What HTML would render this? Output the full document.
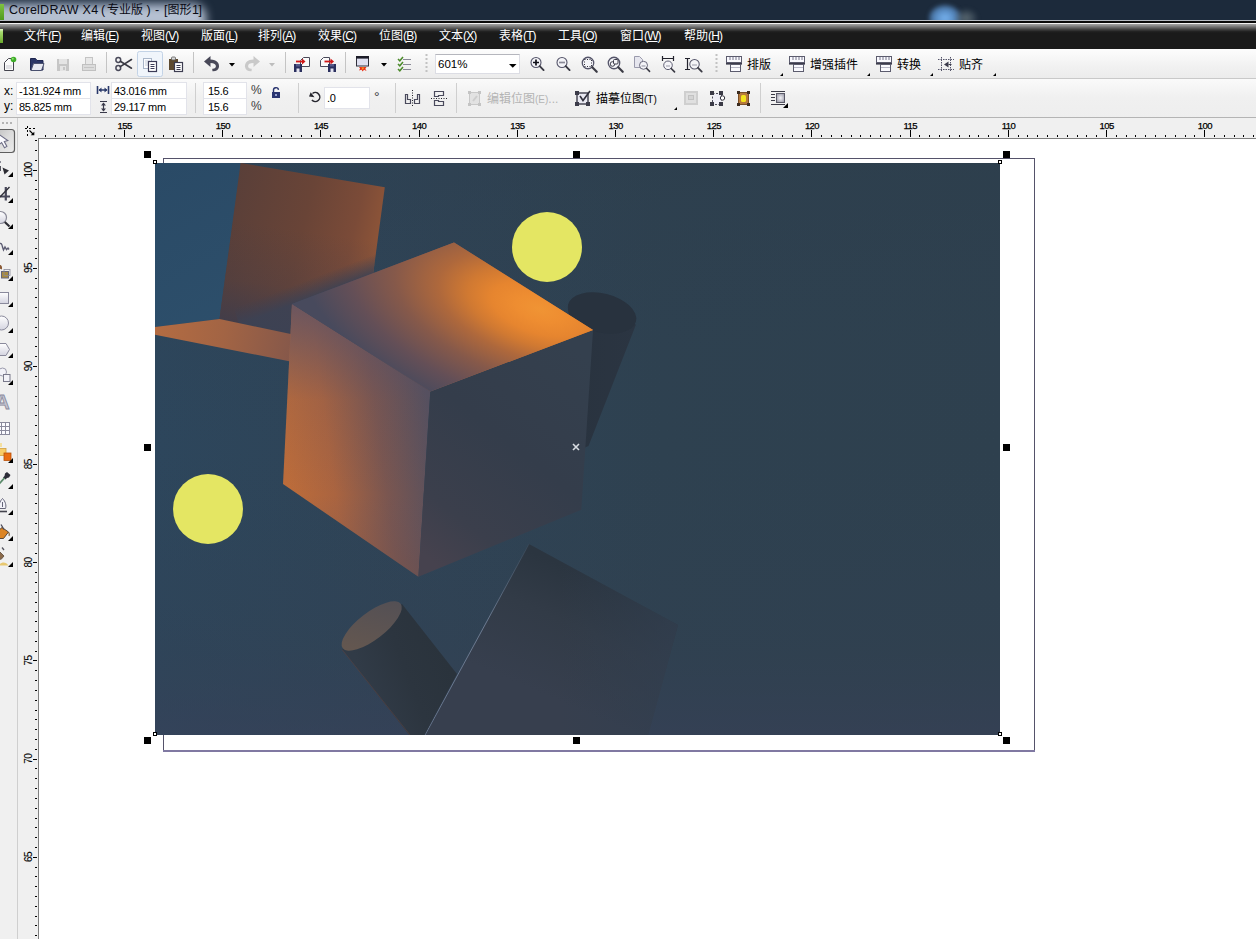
<!DOCTYPE html>
<html lang="zh-CN">
<head>
<meta charset="utf-8">
<title>CorelDRAW X4 ( 专业版 ) - [图形1]</title>
<style>
html,body{margin:0;padding:0;}
body{width:1256px;height:939px;overflow:hidden;background:#fff;position:relative;
 font-family:"Liberation Sans","Noto Sans CJK SC",sans-serif;font-size:12px;color:#000;}
.abs{position:absolute;}
#title{left:0;top:0;width:1256px;height:20px;background:#1c2a3b;overflow:hidden;}
#title .glow{left:-24px;top:3px;width:230px;height:34px;border-radius:14px;background:linear-gradient(rgba(150,166,190,.95),rgba(196,206,220,.97) 35%,rgba(190,200,216,.97) 50%,rgba(172,184,204,.97) 62%);filter:blur(5px);}
#title .txt{top:1px;font-size:12.5px;line-height:18px;color:#0a0a14;white-space:nowrap;}
#title .cj{font-size:12px;top:1px;}
#title .ico{left:0;top:4px;width:4px;height:16px;background:linear-gradient(#7fc241,#4e9a1e);}
#title .blob{left:929px;top:5px;width:32px;height:26px;border-radius:50%;background:radial-gradient(ellipse at center,rgba(120,180,240,1),rgba(100,160,225,.8) 45%,rgba(60,100,150,0) 100%);filter:blur(2px);}
#title .blob2{left:955px;top:9px;width:22px;height:18px;border-radius:50%;background:radial-gradient(ellipse at center,rgba(120,135,140,.7),rgba(90,105,115,.4) 50%,rgba(28,42,59,0) 100%);filter:blur(2px);}
#sep1{left:0;top:20px;width:1256px;height:1px;background:#b4b9c0;}
#sep2{left:0;top:21px;width:1256px;height:2px;background:#0a0a0a;}
#menu{left:0;top:23px;width:1256px;height:26px;
 background:linear-gradient(#f0f0f0 0,#f0f0f0 1px,#a4a4a4 1px,#8c8c8c 2.5px,#666 4.5px,#404040 6.5px,#222 8.5px,#1a1a1a 10px,#1a1a1a 100%);}
#menu span{position:absolute;top:5px;line-height:17px;font-size:12px;color:#fff;white-space:nowrap;}
#menu u{text-decoration:underline;text-underline-offset:1px;}
#menu .ico{left:0;top:6px;width:3px;height:14px;background:linear-gradient(#e8f8d0,#a8dc70 20%,#6aa82c);}
#menu span i{font-style:normal;font-size:12px;letter-spacing:-.9px;}
#tb1{left:0;top:49px;width:1256px;height:29px;background:linear-gradient(#fdfdfd,#f1f1f1 60%,#ececec);}
#tbsep{left:0;top:78px;width:1256px;height:1px;background:#c9c9c9;}
#tb2{left:0;top:79px;width:1256px;height:38px;background:linear-gradient(#fafafa,#f0f0f0 50%,#eeeeee);}
#tb2sep{left:0;top:117px;width:1256px;height:1px;background:#b4b4b4;}
.fld{position:absolute;background:#fff;border:1px solid #e2e3ea;box-sizing:border-box;font-size:11px;line-height:14px;padding-left:2px;white-space:nowrap;letter-spacing:-.27px;}
.lbl{position:absolute;font-size:11px;line-height:14px;white-space:nowrap;}
.tbtxt{position:absolute;font-size:12px;line-height:16px;white-space:nowrap;}
.vsep{position:absolute;width:1px;background:#cfcfcf;}
#hruler{left:18px;top:118px;width:1238px;height:20px;background:#f0f0f0;}
#vruler{left:18px;top:118px;width:20px;height:821px;background:#f0f0f0;}
#toolbox{left:0;top:118px;width:17px;height:821px;background:#f0f0f0;border-right:1px solid #cfcfcf;}
#canvas{left:39px;top:139px;width:1217px;height:800px;background:#fff;}
svg{position:absolute;left:0;top:0;overflow:visible;}
svg text{font-family:"Liberation Sans","Noto Sans CJK SC",sans-serif;}
</style>
</head>
<body>
<div id="title" class="abs">
 <div class="glow abs"></div>
 <div class="blob abs"></div>
 <div class="blob2 abs"></div>
 <div class="ico abs"></div>
 <div class="txt abs" style="left:9px;letter-spacing:.25px">CorelDRAW X4</div>
 <div class="txt abs" style="left:101px">(</div>
 <div class="txt cj abs" style="left:107px">专业版</div>
 <div class="txt abs" style="left:146.500px">)</div>
 <div class="txt abs" style="left:155px">-</div>
 <div class="txt abs" style="left:164px">[</div>
 <div class="txt cj abs" style="left:167.500px">图形</div>
 <div class="txt abs" style="left:192px">1</div>
 <div class="txt abs" style="left:198.500px">]</div>
</div>
<div id="sep1" class="abs"></div>
<div id="sep2" class="abs"></div>
<div id="menu" class="abs">
 <div class="ico abs"></div>
 <span style="left:24px">文件<i>(<u>F</u>)</i></span>
 <span style="left:81px">编辑<i>(<u>E</u>)</i></span>
 <span style="left:141px">视图<i>(<u>V</u>)</i></span>
 <span style="left:201px">版面<i>(<u>L</u>)</i></span>
 <span style="left:258px">排列<i>(<u>A</u>)</i></span>
 <span style="left:318px">效果<i>(<u>C</u>)</i></span>
 <span style="left:379px">位图<i>(<u>B</u>)</i></span>
 <span style="left:439px">文本<i>(<u>X</u>)</i></span>
 <span style="left:499px">表格<i>(<u>T</u>)</i></span>
 <span style="left:558px">工具<i>(<u>O</u>)</i></span>
 <span style="left:620px">窗口<i>(<u>W</u>)</i></span>
 <span style="left:684px">帮助<i>(<u>H</u>)</i></span>
</div>
<div id="tb1" class="abs"></div>
<div id="tbsep" class="abs"></div>
<div id="tb2" class="abs"></div>
<div id="tb2sep" class="abs"></div>
<svg class="abs" width="1256" height="118" viewBox="0 0 1256 118">
<defs>
 <g id="mag"><circle cx="0" cy="0" r="5" fill="#f4f4f8" stroke="#55556a" stroke-width="1.100"/><path d="M3.700 3.700L7.600 7.600" stroke="#3a3a44" stroke-width="1.900" stroke-linecap="round"/></g>
 <g id="tbico"><rect x=".5" y=".5" width="15" height="6" fill="#fafaff" stroke="#5c5c6e"/><path d="M4 1v3M7 1v3M10 1v3M13 1v3" stroke="#77778a" stroke-width="1"/><rect x="0" y="7" width="16" height="1.6" fill="#3c3c4c"/><rect x="4.5" y="8.5" width="10" height="7" fill="#fafaff" stroke="#5c5c6e"/><path d="M5 11.5h9" stroke="#b8b8c8"/></g>
 <path id="fly" d="M0 3h3V0z" fill="#000"/>
</defs>
<!-- new -->
<path d="M4.5 70.500V62.500L8.500 58.500H13.500V70.500Z" fill="#fafafa" stroke="#44444e" stroke-width="1"/>
<path d="M6 66h6M6 68h6" stroke="#c8c8d0" stroke-width="1"/>
<circle cx="13.500" cy="59.500" r="2.800" fill="#3fae2a"/><circle cx="12.800" cy="58.800" r="1" fill="#8fe070"/>
<!-- open -->
<path d="M30.500 70V58.500h5l1.500 2h6V70z" fill="#2a3566" stroke="#1f2750" stroke-width="1"/>
<path d="M31 70.500l2.500-7H44l-2.500 7z" fill="#e6e8f0" stroke="#4a506e" stroke-width="1"/>
<!-- save disabled -->
<g fill="#c6c6c6"><rect x="57" y="59" width="12" height="12"/></g>
<g fill="#e4e4e4"><rect x="59" y="59" width="8" height="5"/><rect x="60" y="66" width="6" height="5"/></g>
<rect x="63" y="67" width="2" height="3" fill="#c6c6c6"/>
<!-- print disabled -->
<rect x="85.500" y="57.500" width="7" height="7" fill="#e8e8e8" stroke="#c4c4c4"/>
<rect x="82.500" y="64.500" width="13" height="6" fill="#dcdcdc" stroke="#c0c0c0"/>
<path d="M84 67.500h10" stroke="#c4c4c4"/>
<rect x="106" y="52" width="1" height="21" fill="#c4c4c4"/>
<!-- scissors -->
<g fill="none" stroke="#4a4a5a" stroke-width="1.500"><circle cx="118.300" cy="60" r="2.400"/><circle cx="118.300" cy="68" r="2.400"/></g>
<path d="M120.300 61.300L131.500 68.200M120.300 66.700L131.500 59.500" stroke="#3a3a44" stroke-width="1.600" stroke-linecap="round"/>
<!-- copy (hot) -->
<rect x="137.500" y="51.500" width="25" height="25" rx="2" fill="#f0f5fb" stroke="#c3d3e6"/>
<rect x="143.500" y="58.500" width="8" height="10" fill="#fbfcff" stroke="#a9b6c9"/>
<path d="M145 61h5M145 63h5M145 65h5" stroke="#c6cfdc"/>
<rect x="148.500" y="61.500" width="8" height="10" fill="#ffffff" stroke="#3c3c58" stroke-width="1.200"/>
<path d="M150.500 64.500h4M150.500 66.500h4M150.500 68.500h4" stroke="#3c3c58"/>
<!-- paste -->
<rect x="169" y="59" width="9" height="11" fill="#5e4b30"/><rect x="171.500" y="57" width="4" height="3" rx="1" fill="#d8d8d8" stroke="#5a5a5a" stroke-width=".8"/>
<rect x="174.500" y="62.500" width="8" height="9" fill="#ffffff" stroke="#3c3c50" stroke-width="1.200"/>
<path d="M176.500 65.500h4M176.500 67.500h4M176.500 69.500h4" stroke="#3c3c50"/>
<rect x="193" y="52" width="1" height="21" fill="#c4c4c4"/>
<!-- undo -->
<path d="M204 61.500L210.500 56v3.500c6.500 0 9 4 8.500 7.500c-.5 3-3 4.500-6.500 4.300l-.3-2.600c2.300.2 3.600-.7 3.700-2.400c.1-2-1.700-3.300-5.400-3.300V67z" fill="#484858"/>
<path d="M229 63h6l-3 3.500z" fill="#000"/>
<!-- redo disabled -->
<path d="M260 61.500L253.500 56v3.500c-6.500 0-9 4-8.500 7.500c.5 3 3 4.500 6.500 4.300l.3-2.600c-2.300.2-3.600-.7-3.700-2.400c-.1-2 1.700-3.300 5.400-3.300V67z" fill="#c9c9c9"/>
<path d="M269 63h6l-3 3.500z" fill="#bdbdbd"/>
<rect x="285" y="52" width="1" height="21" fill="#c4c4c4"/>
<!-- import -->
<path d="M300.500 66.500V60.500l3-3h6v9z" fill="#fbfbfb" stroke="#4a4a5a"/>
<rect x="294" y="64" width="8" height="8" fill="#2a2f5e"/><rect x="296" y="64" width="4" height="2.500" fill="#555a8a"/><rect x="296.500" y="68.500" width="3" height="3.500" fill="#e4e4f0"/>
<path d="M296 61.500h7" stroke="#d01818" stroke-width="1.800"/><path d="M302 58.500l3.500 3l-3.500 3z" fill="#d01818"/>
<!-- export -->
<path d="M320.500 66.500V60.500l3-3h6v9z" fill="#fbfbfb" stroke="#4a4a5a"/>
<rect x="328" y="64" width="8" height="8" fill="#2a2f5e"/><rect x="330" y="64" width="4" height="2.500" fill="#555a8a"/><rect x="330.500" y="68.500" width="3" height="3.500" fill="#e4e4f0"/>
<path d="M324.500 61.500h7" stroke="#d01818" stroke-width="1.800"/><path d="M330.500 58.500l3.500 3l-3.500 3z" fill="#d01818"/>
<rect x="345" y="52" width="1" height="21" fill="#c4c4c4"/>
<!-- launcher -->
<rect x="356.500" y="56.500" width="12" height="9.500" fill="#dfe0f0" stroke="#30303c"/><rect x="356" y="56" width="13" height="2.600" fill="#1c1c28"/>
<path d="M359 67h7.500l-1.200 1.700l1.200 2.300l-2.500-1.200l-1.300 1.700l-1.200-1.800l-2.500.9l1.100-2z" fill="#e83018"/><path d="M361.300 67.500h3l-1.500 2.500z" fill="#f8a020"/>
<path d="M381 63h6l-3 3.500z" fill="#000"/>
<!-- checklist -->
<g stroke="#8a8a96" stroke-width="1.200"><path d="M403 59.500h8M403 64.500h8M403 69.500h8"/></g>
<g fill="none" stroke="#4b8a2a" stroke-width="1.500"><path d="M398 59l1.800 1.800L403 57M398 64l1.800 1.800L403 62M398 69l1.800 1.800L403 67"/></g>
<path d="M426.500 54v20" stroke="#c2c2c2" stroke-width="2" stroke-dasharray="2 2"/>
<!-- zoom combo -->
<rect x="435.500" y="54.500" width="84" height="19" fill="#fff" stroke="#dcdde4"/><path d="M435.500 54.500h84" stroke="#b5b6bd"/>
<path d="M509 64h7.500l-3.750 3.800z" fill="#000"/>
<!-- zoom in/out -->
<use href="#mag" x="536" y="62.500"/><path d="M533 62.500h6M536 59.500v6" stroke="#101018" stroke-width="1.700"/>
<use href="#mag" x="562" y="62.500"/><path d="M559 62.500h6" stroke="#8a8a98" stroke-width="1.700"/>
<!-- zoom selected -->
<g transform="translate(588 63) scale(1.150)"><use href="#mag"/></g><rect x="584.500" y="59.500" width="7" height="7" fill="none" stroke="#33333f" stroke-dasharray="1 1.500"/>
<!-- zoom all -->
<g transform="translate(614 63) scale(1.150)"><use href="#mag"/></g><circle cx="612.500" cy="64" r="2.300" fill="none" stroke="#3c3c4a"/><rect x="613.500" y="59.500" width="4.500" height="4.500" rx="1" fill="#f4f4f8" stroke="#3c3c4a"/>
<!-- zoom page -->
<path d="M634.500 67.500V56.500h5l3 3v8z" fill="#e6e6ee" stroke="#9a9aac"/><g transform="translate(643.500 65.300) scale(.8)"><use href="#mag"/></g><path d="M641.500 66h4" stroke="#8a8a98"/>
<!-- zoom width -->
<path d="M662 58.500h12M662.500 56v5M673.500 56v5" stroke="#22222c" stroke-width="1.200"/><g transform="translate(668 65.300) scale(.86)"><use href="#mag"/></g><path d="M666 66h4" stroke="#9a9aa8"/>
<!-- zoom height -->
<path d="M687.500 58v12M685 58.500h5M685 69.500h5" stroke="#22222c" stroke-width="1.200"/><g transform="translate(694.500 64.300) scale(.95)"><use href="#mag"/></g><path d="M692 65h5" stroke="#9a9aa8"/>
<path d="M716.500 54v20" stroke="#c2c2c2" stroke-width="2" stroke-dasharray="2 2"/>
<!-- text toolbars -->
<use href="#tbico" x="726" y="56"/><use href="#fly" x="780" y="73"/>
<use href="#tbico" x="789" y="56"/><use href="#fly" x="867" y="73"/>
<use href="#tbico" x="876" y="56"/><use href="#fly" x="930" y="73"/>
<g stroke="#55556a" stroke-width="1" stroke-dasharray="1.500 1"><path d="M938 59.500h16M938 69.500h16M941.500 57v15M950.500 57v15"/></g><path d="M948.500 61.500v6l-4.500-3z" fill="#3a3a4a"/><path d="M948.500 64.500h3" stroke="#3a3a4a"/>
<use href="#fly" x="993" y="73"/>
</svg>
<div class="lbl" style="left:438px;top:57px;font-size:11.500px;line-height:14px">601%</div>
<div class="tbtxt" style="left:747px;top:57px">排版</div>
<div class="tbtxt" style="left:810px;top:57px">增强插件</div>
<div class="tbtxt" style="left:897px;top:57px">转换</div>
<div class="tbtxt" style="left:959px;top:57px">贴齐</div>
<div class="lbl" style="left:4px;top:84px;font-size:12px">x:</div>
<div class="lbl" style="left:4px;top:99px;font-size:12px">y:</div>
<div class="fld" style="left:16px;top:82px;width:75px;height:17px;line-height:17px">-131.924 mm</div>
<div class="fld" style="left:16px;top:98px;width:75px;height:17px;line-height:17px">85.825 mm</div>
<div class="fld" style="left:111px;top:82px;width:76px;height:17px;line-height:17px">43.016 mm</div>
<div class="fld" style="left:111px;top:98px;width:76px;height:17px;line-height:17px">29.117 mm</div>
<div class="fld" style="left:203px;top:82px;width:44px;height:17px;line-height:17px;padding-left:4px">15.6</div>
<div class="fld" style="left:203px;top:98px;width:44px;height:17px;line-height:17px;padding-left:4px">15.6</div>
<div class="lbl" style="left:251px;top:83px;font-size:12px;color:#3c3c3c">%</div>
<div class="lbl" style="left:251px;top:99px;font-size:12px;color:#3c3c3c">%</div>
<div class="fld" style="left:324px;top:87px;width:46px;height:22px;line-height:20px">.0</div>
<div class="lbl" style="left:374px;top:90px;font-size:14px;color:#3c3c3c">°</div>
<div class="tbtxt" style="left:487px;top:91px;color:#b4b4b4">编辑位图<span style="font-size:10px">(E)</span>...</div>
<div class="tbtxt" style="left:596px;top:91px">描摹位图<span style="font-size:10px">(T)</span></div>
<svg class="abs" width="1256" height="118" viewBox="0 0 1256 118">
<!-- width / height icons -->
<g stroke="#2b3a6b" stroke-width="1.600" fill="#2b3a6b"><path d="M97.500 86v8M108.500 86v8M99 90h8" fill="none"/><path d="M98.500 90l3-2.500v5zM107.500 90l-3-2.500v5z" stroke="none"/></g>
<g stroke="#3a3a4a" stroke-width="1.200" fill="#3a3a4a"><path d="M100 101.500h7M100 112.500h7M103.500 103v8" fill="none"/><path d="M103.500 102.500l2.500 3h-5zM103.500 111.500l2.500-3h-5z" stroke="none"/></g>
<rect x="195" y="83" width="1" height="30" fill="#cfcfcf"/>
<!-- lock -->
<rect x="272" y="92" width="8" height="6" fill="#2a3570"/><path d="M273.500 92v-1.500a2.500 2.500 0 0 1 5-.6" fill="none" stroke="#2a3570" stroke-width="1.400"/><rect x="275" y="94" width="2" height="2" fill="#9aa4d0"/>
<rect x="298" y="83" width="1" height="30" fill="#cfcfcf"/>
<!-- rotate -->
<path d="M312.500 93.500a4.500 4.500 0 1 1 -.6 6.500" fill="none" stroke="#26262e" stroke-width="1.500"/><path d="M309 96.500l5.500.8l-3.800-5z" fill="#26262e"/>
<rect x="395" y="83" width="1" height="30" fill="#cfcfcf"/>
<!-- mirror -->
<g fill="none" stroke="#4a4a5c" stroke-width="1.200"><path d="M405.500 94.500v9h5v-4h-3v-5zM419.500 94.500v9h-5v-4h3v-5z"/></g><path d="M412.500 90v16" stroke="#22222a" stroke-dasharray="1 1.500"/>
<g fill="none" stroke="#4a4a5c" stroke-width="1.200"><path d="M434.500 91.500h9v4h-5v1h-4zM434.500 105.500h9v-4h-5v-1h-4z"/></g><path d="M431 98.500h16" stroke="#22222a" stroke-dasharray="1 1.500"/>
<rect x="456" y="83" width="1" height="30" fill="#cfcfcf"/>
<!-- edit bitmap disabled -->
<rect x="469.500" y="92.500" width="10" height="12" fill="#e2e2e2" stroke="#c8c8c8"/><g fill="#c4c4c4"><rect x="468" y="91" width="3" height="3"/><rect x="478" y="91" width="3" height="3"/><rect x="468" y="103" width="3" height="3"/><rect x="478" y="103" width="3" height="3"/></g><path d="M473 101l4-5" stroke="#cdcdcd" stroke-width="2"/>
<!-- trace bitmap -->
<rect x="577" y="93" width="11" height="11" fill="#e9e9f2" stroke="#3c3c4a" stroke-width="1.400"/><g fill="#3c3c4a"><rect x="575" y="91" width="4" height="4"/><rect x="586" y="102" width="4" height="4"/><rect x="575" y="102" width="4" height="4"/></g><path d="M580 96l3 4.500l7-9.500" fill="none" stroke="#30303c" stroke-width="1.600"/>
<path d="M674 110h3v-3z" fill="#000"/>
<!-- crop disabled -->
<rect x="685" y="92" width="12" height="12" fill="#e0e0e0" stroke="#cfcfcf" stroke-width="2"/><rect x="688.500" y="95.500" width="5" height="4" fill="#d4d4d4" stroke="#c2c2c2"/>
<!-- frame icon -->
<rect x="712.500" y="93.500" width="9" height="11" fill="#eeeef6" stroke="#50505e" stroke-dasharray="2 1.500"/><g fill="#3a3a46"><rect x="710" y="91" width="4" height="4"/><rect x="719" y="91" width="4" height="4"/><rect x="710" y="102" width="4" height="4"/><rect x="719" y="102" width="4" height="4"/></g><circle cx="722.500" cy="98" r="2.200" fill="#fff" stroke="#30303a"/>
<!-- yellow frame -->
<rect x="738.500" y="92.500" width="10" height="12" fill="#b5793c" stroke="#7a4e26"/><rect x="741" y="95" width="5" height="7" rx="1.500" fill="#f3e21c"/><g fill="#3c2c20"><rect x="737" y="91" width="3" height="3"/><rect x="747" y="91" width="3" height="3"/><rect x="737" y="103" width="3" height="3"/><rect x="747" y="103" width="3" height="3"/></g>
<rect x="760" y="83" width="1" height="30" fill="#cfcfcf"/>
<!-- wrap -->
<defs><radialGradient id="wg" cx=".5" cy=".5" r=".6"><stop offset="0" stop-color="#f4f4f8"/><stop offset="1" stop-color="#9a9aa8"/></radialGradient></defs>
<path d="M771 91.500h14M771 94.500h4M771 97.500h4M771 100.500h4M771 104.500h14" stroke="#3a3a46"/><rect x="776.500" y="93.500" width="8" height="9" fill="url(#wg)" stroke="#5a5a68"/>
<path d="M783 108h5v-5z" fill="#000"/>
</svg>
<svg class="abs" width="1256" height="939" viewBox="0 0 1256 939">
<rect x="18" y="118" width="1238" height="20" fill="#f0f0f0"/>
<rect x="18" y="118" width="20" height="821" fill="#f0f0f0"/>
<g fill="#000" shape-rendering="crispEdges">
<rect x="45" y="135" width="1" height="2"/>
<rect x="55" y="135" width="1" height="2"/>
<rect x="65" y="135" width="1" height="2"/>
<rect x="75" y="135" width="1" height="2"/>
<rect x="85" y="135" width="1" height="2"/>
<rect x="95" y="135" width="1" height="2"/>
<rect x="104" y="135" width="1" height="2"/>
<rect x="114" y="135" width="1" height="2"/>
<rect x="124" y="130" width="1" height="7"/>
<rect x="134" y="135" width="1" height="2"/>
<rect x="144" y="135" width="1" height="2"/>
<rect x="153" y="135" width="1" height="2"/>
<rect x="163" y="135" width="1" height="2"/>
<rect x="173" y="135" width="1" height="2"/>
<rect x="183" y="135" width="1" height="2"/>
<rect x="193" y="135" width="1" height="2"/>
<rect x="203" y="135" width="1" height="2"/>
<rect x="212" y="135" width="1" height="2"/>
<rect x="222" y="130" width="1" height="7"/>
<rect x="232" y="135" width="1" height="2"/>
<rect x="242" y="135" width="1" height="2"/>
<rect x="252" y="135" width="1" height="2"/>
<rect x="261" y="135" width="1" height="2"/>
<rect x="271" y="135" width="1" height="2"/>
<rect x="281" y="135" width="1" height="2"/>
<rect x="291" y="135" width="1" height="2"/>
<rect x="301" y="135" width="1" height="2"/>
<rect x="311" y="135" width="1" height="2"/>
<rect x="320" y="130" width="1" height="7"/>
<rect x="330" y="135" width="1" height="2"/>
<rect x="340" y="135" width="1" height="2"/>
<rect x="350" y="135" width="1" height="2"/>
<rect x="360" y="135" width="1" height="2"/>
<rect x="370" y="135" width="1" height="2"/>
<rect x="379" y="135" width="1" height="2"/>
<rect x="389" y="135" width="1" height="2"/>
<rect x="399" y="135" width="1" height="2"/>
<rect x="409" y="135" width="1" height="2"/>
<rect x="419" y="130" width="1" height="7"/>
<rect x="428" y="135" width="1" height="2"/>
<rect x="438" y="135" width="1" height="2"/>
<rect x="448" y="135" width="1" height="2"/>
<rect x="458" y="135" width="1" height="2"/>
<rect x="468" y="135" width="1" height="2"/>
<rect x="478" y="135" width="1" height="2"/>
<rect x="487" y="135" width="1" height="2"/>
<rect x="497" y="135" width="1" height="2"/>
<rect x="507" y="135" width="1" height="2"/>
<rect x="517" y="130" width="1" height="7"/>
<rect x="527" y="135" width="1" height="2"/>
<rect x="536" y="135" width="1" height="2"/>
<rect x="546" y="135" width="1" height="2"/>
<rect x="556" y="135" width="1" height="2"/>
<rect x="566" y="135" width="1" height="2"/>
<rect x="576" y="135" width="1" height="2"/>
<rect x="586" y="135" width="1" height="2"/>
<rect x="595" y="135" width="1" height="2"/>
<rect x="605" y="135" width="1" height="2"/>
<rect x="615" y="130" width="1" height="7"/>
<rect x="625" y="135" width="1" height="2"/>
<rect x="635" y="135" width="1" height="2"/>
<rect x="644" y="135" width="1" height="2"/>
<rect x="654" y="135" width="1" height="2"/>
<rect x="664" y="135" width="1" height="2"/>
<rect x="674" y="135" width="1" height="2"/>
<rect x="684" y="135" width="1" height="2"/>
<rect x="694" y="135" width="1" height="2"/>
<rect x="703" y="135" width="1" height="2"/>
<rect x="713" y="130" width="1" height="7"/>
<rect x="723" y="135" width="1" height="2"/>
<rect x="733" y="135" width="1" height="2"/>
<rect x="743" y="135" width="1" height="2"/>
<rect x="752" y="135" width="1" height="2"/>
<rect x="762" y="135" width="1" height="2"/>
<rect x="772" y="135" width="1" height="2"/>
<rect x="782" y="135" width="1" height="2"/>
<rect x="792" y="135" width="1" height="2"/>
<rect x="802" y="135" width="1" height="2"/>
<rect x="811" y="130" width="1" height="7"/>
<rect x="821" y="135" width="1" height="2"/>
<rect x="831" y="135" width="1" height="2"/>
<rect x="841" y="135" width="1" height="2"/>
<rect x="851" y="135" width="1" height="2"/>
<rect x="860" y="135" width="1" height="2"/>
<rect x="870" y="135" width="1" height="2"/>
<rect x="880" y="135" width="1" height="2"/>
<rect x="890" y="135" width="1" height="2"/>
<rect x="900" y="135" width="1" height="2"/>
<rect x="910" y="130" width="1" height="7"/>
<rect x="919" y="135" width="1" height="2"/>
<rect x="929" y="135" width="1" height="2"/>
<rect x="939" y="135" width="1" height="2"/>
<rect x="949" y="135" width="1" height="2"/>
<rect x="959" y="135" width="1" height="2"/>
<rect x="969" y="135" width="1" height="2"/>
<rect x="978" y="135" width="1" height="2"/>
<rect x="988" y="135" width="1" height="2"/>
<rect x="998" y="135" width="1" height="2"/>
<rect x="1008" y="130" width="1" height="7"/>
<rect x="1018" y="135" width="1" height="2"/>
<rect x="1027" y="135" width="1" height="2"/>
<rect x="1037" y="135" width="1" height="2"/>
<rect x="1047" y="135" width="1" height="2"/>
<rect x="1057" y="135" width="1" height="2"/>
<rect x="1067" y="135" width="1" height="2"/>
<rect x="1077" y="135" width="1" height="2"/>
<rect x="1086" y="135" width="1" height="2"/>
<rect x="1096" y="135" width="1" height="2"/>
<rect x="1106" y="130" width="1" height="7"/>
<rect x="1116" y="135" width="1" height="2"/>
<rect x="1126" y="135" width="1" height="2"/>
<rect x="1135" y="135" width="1" height="2"/>
<rect x="1145" y="135" width="1" height="2"/>
<rect x="1155" y="135" width="1" height="2"/>
<rect x="1165" y="135" width="1" height="2"/>
<rect x="1175" y="135" width="1" height="2"/>
<rect x="1185" y="135" width="1" height="2"/>
<rect x="1194" y="135" width="1" height="2"/>
<rect x="1204" y="130" width="1" height="7"/>
<rect x="1214" y="135" width="1" height="2"/>
<rect x="1224" y="135" width="1" height="2"/>
<rect x="1234" y="135" width="1" height="2"/>
<rect x="1243" y="135" width="1" height="2"/>
<rect x="1253" y="135" width="1" height="2"/>
<rect x="35" y="140" width="2" height="1"/>
<rect x="35" y="150" width="2" height="1"/>
<rect x="35" y="160" width="2" height="1"/>
<rect x="33" y="170" width="4" height="1"/>
<rect x="35" y="180" width="2" height="1"/>
<rect x="35" y="189" width="2" height="1"/>
<rect x="35" y="199" width="2" height="1"/>
<rect x="35" y="209" width="2" height="1"/>
<rect x="35" y="219" width="2" height="1"/>
<rect x="35" y="229" width="2" height="1"/>
<rect x="35" y="238" width="2" height="1"/>
<rect x="35" y="248" width="2" height="1"/>
<rect x="35" y="258" width="2" height="1"/>
<rect x="33" y="268" width="4" height="1"/>
<rect x="35" y="278" width="2" height="1"/>
<rect x="35" y="288" width="2" height="1"/>
<rect x="35" y="297" width="2" height="1"/>
<rect x="35" y="307" width="2" height="1"/>
<rect x="35" y="317" width="2" height="1"/>
<rect x="35" y="327" width="2" height="1"/>
<rect x="35" y="337" width="2" height="1"/>
<rect x="35" y="346" width="2" height="1"/>
<rect x="35" y="356" width="2" height="1"/>
<rect x="33" y="366" width="4" height="1"/>
<rect x="35" y="376" width="2" height="1"/>
<rect x="35" y="386" width="2" height="1"/>
<rect x="35" y="396" width="2" height="1"/>
<rect x="35" y="405" width="2" height="1"/>
<rect x="35" y="415" width="2" height="1"/>
<rect x="35" y="425" width="2" height="1"/>
<rect x="35" y="435" width="2" height="1"/>
<rect x="35" y="445" width="2" height="1"/>
<rect x="35" y="454" width="2" height="1"/>
<rect x="33" y="464" width="4" height="1"/>
<rect x="35" y="474" width="2" height="1"/>
<rect x="35" y="484" width="2" height="1"/>
<rect x="35" y="494" width="2" height="1"/>
<rect x="35" y="503" width="2" height="1"/>
<rect x="35" y="513" width="2" height="1"/>
<rect x="35" y="523" width="2" height="1"/>
<rect x="35" y="533" width="2" height="1"/>
<rect x="35" y="543" width="2" height="1"/>
<rect x="35" y="553" width="2" height="1"/>
<rect x="33" y="562" width="4" height="1"/>
<rect x="35" y="572" width="2" height="1"/>
<rect x="35" y="582" width="2" height="1"/>
<rect x="35" y="592" width="2" height="1"/>
<rect x="35" y="602" width="2" height="1"/>
<rect x="35" y="611" width="2" height="1"/>
<rect x="35" y="621" width="2" height="1"/>
<rect x="35" y="631" width="2" height="1"/>
<rect x="35" y="641" width="2" height="1"/>
<rect x="35" y="651" width="2" height="1"/>
<rect x="33" y="660" width="4" height="1"/>
<rect x="35" y="670" width="2" height="1"/>
<rect x="35" y="680" width="2" height="1"/>
<rect x="35" y="690" width="2" height="1"/>
<rect x="35" y="700" width="2" height="1"/>
<rect x="35" y="710" width="2" height="1"/>
<rect x="35" y="719" width="2" height="1"/>
<rect x="35" y="729" width="2" height="1"/>
<rect x="35" y="739" width="2" height="1"/>
<rect x="35" y="749" width="2" height="1"/>
<rect x="33" y="759" width="4" height="1"/>
<rect x="35" y="768" width="2" height="1"/>
<rect x="35" y="778" width="2" height="1"/>
<rect x="35" y="788" width="2" height="1"/>
<rect x="35" y="798" width="2" height="1"/>
<rect x="35" y="808" width="2" height="1"/>
<rect x="35" y="818" width="2" height="1"/>
<rect x="35" y="827" width="2" height="1"/>
<rect x="35" y="837" width="2" height="1"/>
<rect x="35" y="847" width="2" height="1"/>
<rect x="33" y="857" width="4" height="1"/>
<rect x="35" y="867" width="2" height="1"/>
<rect x="35" y="876" width="2" height="1"/>
<rect x="35" y="886" width="2" height="1"/>
<rect x="35" y="896" width="2" height="1"/>
<rect x="35" y="906" width="2" height="1"/>
<rect x="35" y="916" width="2" height="1"/>
<rect x="35" y="925" width="2" height="1"/>
<rect x="35" y="935" width="2" height="1"/>
</g>
<g font-size="9.5" fill="#000" stroke="#000" stroke-width="0.25" text-anchor="middle" letter-spacing="-0.55">
<text x="124.6" y="129">155</text>
<text x="222.8" y="129">150</text>
<text x="321.0" y="129">145</text>
<text x="419.2" y="129">140</text>
<text x="517.4" y="129">135</text>
<text x="615.6" y="129">130</text>
<text x="713.8" y="129">125</text>
<text x="812.0" y="129">120</text>
<text x="910.2" y="129">115</text>
<text x="1008.4" y="129">110</text>
<text x="1106.6" y="129">105</text>
<text x="1204.8" y="129">100</text>
<text transform="translate(32 169.9) rotate(-90)" x="0" y="0" stroke-width="0.1" font-size="10">100</text>
<text transform="translate(32 268.0) rotate(-90)" x="0" y="0" stroke-width="0.1" font-size="10">95</text>
<text transform="translate(32 366.2) rotate(-90)" x="0" y="0" stroke-width="0.1" font-size="10">90</text>
<text transform="translate(32 464.3) rotate(-90)" x="0" y="0" stroke-width="0.1" font-size="10">85</text>
<text transform="translate(32 562.5) rotate(-90)" x="0" y="0" stroke-width="0.1" font-size="10">80</text>
<text transform="translate(32 660.6) rotate(-90)" x="0" y="0" stroke-width="0.1" font-size="10">75</text>
<text transform="translate(32 758.7) rotate(-90)" x="0" y="0" stroke-width="0.1" font-size="10">70</text>
<text transform="translate(32 856.9) rotate(-90)" x="0" y="0" stroke-width="0.1" font-size="10">65</text>
</g>
<rect x="38" y="138" width="1218" height="1" fill="#7f7f7f"/>
<rect x="38" y="138" width="1" height="801" fill="#7f7f7f"/>
<g stroke="#000" stroke-width="1" fill="none" shape-rendering="crispEdges"><path d="M27.5 126v2M27.5 130v2M27.5 134v2M25 128.5h2M29 128.5h2M33 128.5h2"/></g>
<path d="M29.5 130.5L33 134" stroke="#000" stroke-width="1.1"/><path d="M34.300 135.300v-3.600l-3.600 3.600z" fill="#000"/>
</svg><div id="toolbox" class="abs"></div>
<svg class="abs" width="18" height="939" viewBox="0 0 18 939" style="overflow:hidden">
<defs>
 <path id="tf" d="M0 5h5V0z" fill="#000"/>
 <linearGradient id="pk" x1="0" y1="0" x2="1" y2="1"><stop offset="0" stop-color="#bdbdbd"/><stop offset=".5" stop-color="#dcdcdc"/><stop offset="1" stop-color="#ececec"/></linearGradient>
 <linearGradient id="shp" x1="0" y1="0" x2="0" y2="1"><stop offset="0" stop-color="#ffffff"/><stop offset="1" stop-color="#d4d4e0"/></linearGradient>
</defs>
<g fill="#b4b4b4"><rect x="2" y="122" width="2" height="2"/><rect x="6" y="122" width="2" height="2"/><rect x="10" y="122" width="2" height="2"/></g>
<!-- pick (active) -->
<rect x="-6" y="129.500" width="20.500" height="23" rx="3" fill="url(#pk)" stroke="#5e5e5e" stroke-width="1.200"/>
<path d="M-3 133L7.800 140.500L4.300 141.600L6.900 146.400L4.500 147.800L1.600 142.600L-1.500 145z" fill="#fbfbff" stroke="#6c6c84" stroke-width="1.100"/>
<!-- shape -->
<path d="M2.500 167.500L9 170.500L4.500 174.500z" fill="#2c2c34"/><rect x="-1" y="161" width="2" height="2" fill="#8a8a96"/><rect x="-1" y="166" width="2" height="5" fill="#55555f"/>
<use href="#tf" x="8" y="172"/>
<!-- crop -->
<path d="M5.800 187v13.500M-2 196.500h12" stroke="#48485a" stroke-width="2.200" fill="none"/><path d="M0 197L9.500 187" stroke="#30303a" stroke-width="1.400"/>
<use href="#tf" x="8" y="198"/>
<!-- zoom -->
<circle cx="0.500" cy="217.500" r="6" fill="url(#shp)" stroke="#8a8a98" stroke-width="1.200"/><path d="M4.800 222L9.500 226.500" stroke="#2c2c34" stroke-width="2.200"/>
<use href="#tf" x="8" y="224"/>
<!-- freehand -->
<path d="M-1 244.500c2-2.500 3-.5 3.500 2.500l1 3l1.500-3l1.500 2.500l1.500-1.500l1 1.500" fill="none" stroke="#5c5c72" stroke-width="1.400"/>
<use href="#tf" x="8" y="250"/>
<!-- smart fill -->
<path d="M-1 263l3 3.500v3l-3-1z" fill="#8a5a36"/><rect x="1.500" y="271.500" width="7" height="6.500" fill="#a88a3e" stroke="#66667a"/><rect x="4" y="269.500" width="6" height="6" fill="none" stroke="#8a8a9a" stroke-width=".8"/>
<use href="#tf" x="8" y="276"/>
<!-- rectangle -->
<rect x="-4" y="292.500" width="12.500" height="11" fill="url(#shp)" stroke="#8a8a9c"/>
<use href="#tf" x="8" y="302"/>
<!-- ellipse -->
<circle cx="1.500" cy="323" r="7" fill="url(#shp)" stroke="#8a8a9c"/>
<use href="#tf" x="8" y="328"/>
<!-- polygon -->
<path d="M-6 343.500H6L9.500 349.500L6 355.500H-6z" fill="url(#shp)" stroke="#8a8a9c"/>
<use href="#tf" x="8" y="353"/>
<!-- basic shapes -->
<circle cx="2.500" cy="372" r="4" fill="#f2f2f8" stroke="#9a9aac"/><rect x="3.500" y="374.500" width="6.500" height="7" fill="#f2f2f8" stroke="#7a7a8c"/>
<use href="#tf" x="8" y="380"/>
<!-- text A -->
<text x="-5.500" y="409" font-size="21" font-weight="bold" fill="#c4c4d0" stroke="#8a8a9c" stroke-width=".8">A</text>
<!-- table -->
<g fill="none" stroke="#8a8a9c"><rect x="-3.500" y="422.500" width="13" height="12" fill="#fbfbff"/><path d="M-3 426.500h12M-3 430.500h12M1.500 423v11M5.500 423v11"/></g>
<!-- blend -->
<rect x="-1" y="448.500" width="7" height="7" fill="#f8cc68" stroke="#d0a040" stroke-width=".8"/><rect x="4" y="453" width="7" height="7.500" fill="#ea6c12" stroke="#b85008" stroke-width=".8"/><rect x="-1" y="443" width="3" height="4" fill="#f4e0a0"/>
<use href="#tf" x="8" y="458"/>
<!-- eyedropper -->
<path d="M5 473.500l2-1.500l3.500 3l-1.500 2.500l-2 .5l-1.500 1.500l-2.500-2l1.500-1.500z" fill="#2c2c38"/><path d="M4.500 478L-1 484" stroke="#5a8a6a" stroke-width="1.800"/>
<use href="#tf" x="8" y="484"/>
<!-- outline -->
<path d="M2.500 498.500c3 3 4 7 3 10h-6c-1-3 0-7 3-10z" fill="#f2f2f8" stroke="#66667a"/><path d="M2.500 502v5" stroke="#66667a"/><path d="M-2 511.500h9" stroke="#44444e" stroke-width="1.600"/>
<use href="#tf" x="8" y="510"/>
<!-- fill -->
<path d="M-2 531l4-3.500l6.500 4.500l-5 6.500h-5.500z" fill="#dc8422" stroke="#4a3a2a" stroke-width=".9"/><path d="M1 524.500l3 5" stroke="#4a4a5a" stroke-width="1.300"/><path d="M8.500 532c1 1.500 1.300 2.500.5 4" stroke="#7a5a30" stroke-width="1.200" fill="none"/>
<use href="#tf" x="8" y="536"/>
<!-- interactive fill -->
<path d="M-1 551l5 5l-3 3.500l-3-2z" fill="#8a6a4a" stroke="#5a4a3a" stroke-width=".8"/><path d="M-1 565.500c2-4 7-4 9.500 0z" fill="#e8c870"/><path d="M2 547.500l2 2.500" stroke="#55555f" stroke-width="1.300"/>
<use href="#tf" x="8" y="562"/>
</svg>
<svg id="scene" class="abs" width="1256" height="939" viewBox="0 0 1256 939">
<defs>
 <clipPath id="imgclip"><rect x="155" y="163" width="845" height="572"/></clipPath>
 <linearGradient id="bgH" x1="155" y1="0" x2="1000" y2="0" gradientUnits="userSpaceOnUse">
  <stop offset="0" stop-color="#2d465c"/><stop offset=".35" stop-color="#2f4355"/><stop offset=".6" stop-color="#2e4150"/><stop offset="1" stop-color="#2e404e"/>
 </linearGradient>
 <linearGradient id="bgV" x1="0" y1="163" x2="0" y2="734" gradientUnits="userSpaceOnUse">
  <stop offset="0" stop-color="#2c3c4a" stop-opacity=".3"/><stop offset=".5" stop-color="#2f4254" stop-opacity="0"/><stop offset=".85" stop-color="#344052" stop-opacity=".3"/><stop offset="1" stop-color="#394058" stop-opacity=".55"/>
 </linearGradient>
 <linearGradient id="tlblue" x1="155" y1="163" x2="250" y2="330" gradientUnits="userSpaceOnUse">
  <stop offset="0" stop-color="#2a4a66"/><stop offset="1" stop-color="#2d4f6b"/>
 </linearGradient>
 <linearGradient id="backface" x1="228" y1="200" x2="382" y2="235" gradientUnits="userSpaceOnUse">
  <stop offset="0" stop-color="#593f39"/><stop offset=".5" stop-color="#694437"/><stop offset=".82" stop-color="#7b4b38"/><stop offset="1" stop-color="#8e5538"/>
 </linearGradient>
 <linearGradient id="backshade" x1="300" y1="230" x2="285" y2="335" gradientUnits="userSpaceOnUse">
  <stop offset="0" stop-color="#3c3c4c" stop-opacity="0"/><stop offset=".55" stop-color="#3c3c4c" stop-opacity=".25"/><stop offset="1" stop-color="#3a3c4e" stop-opacity=".85"/>
 </linearGradient>
 <linearGradient id="litband" x1="155" y1="330" x2="292" y2="350" gradientUnits="userSpaceOnUse">
  <stop offset="0" stop-color="#b46c42"/><stop offset=".5" stop-color="#a26444"/><stop offset="1" stop-color="#86584a"/>
 </linearGradient>
 <linearGradient id="topbase" x1="292" y1="304" x2="593" y2="330" gradientUnits="userSpaceOnUse">
  <stop offset="0" stop-color="#3f495d"/><stop offset=".22" stop-color="#524b5c"/><stop offset=".45" stop-color="#7c5650"/><stop offset=".65" stop-color="#aa643e"/><stop offset="1" stop-color="#e07a26"/>
 </linearGradient>
 <radialGradient id="topglow" cx="0" cy="0" r="1" gradientUnits="userSpaceOnUse" gradientTransform="translate(540 309) rotate(17) scale(250 122)">
  <stop offset="0" stop-color="#f09434"/><stop offset=".1" stop-color="#ee8d31"/><stop offset=".2" stop-color="#e6852f"/><stop offset=".3" stop-color="#d07932"/><stop offset=".42" stop-color="#ae683c"/><stop offset=".6" stop-color="#86594a"/><stop offset=".8" stop-color="#644f57"/><stop offset="1" stop-color="#484a5d"/>
 </radialGradient>
 <linearGradient id="leftbase" x1="283" y1="440" x2="430" y2="420" gradientUnits="userSpaceOnUse">
  <stop offset="0" stop-color="#bc6c3a"/><stop offset=".3" stop-color="#aa6440"/><stop offset=".65" stop-color="#7a5650"/><stop offset="1" stop-color="#56505e"/>
 </linearGradient>
 <linearGradient id="leftshade" x1="0" y1="304" x2="0" y2="577" gradientUnits="userSpaceOnUse">
  <stop offset="0" stop-color="#54506a" stop-opacity=".75"/><stop offset=".35" stop-color="#54506a" stop-opacity=".1"/><stop offset=".7" stop-color="#54506a" stop-opacity="0"/><stop offset="1" stop-color="#6a4c48" stop-opacity=".3"/>
 </linearGradient>
 <linearGradient id="rightface" x1="430" y1="560" x2="590" y2="360" gradientUnits="userSpaceOnUse">
  <stop offset="0" stop-color="#46424e"/><stop offset=".2" stop-color="#3b3f4c"/><stop offset=".55" stop-color="#343d4b"/><stop offset="1" stop-color="#34404e"/>
 </linearGradient>
 <linearGradient id="cyl1" x1="575" y1="0" x2="640" y2="0" gradientUnits="userSpaceOnUse">
  <stop offset="0" stop-color="#29333f"/><stop offset="1" stop-color="#2b3542"/>
 </linearGradient>
 <linearGradient id="cubeB" x1="606" y1="584" x2="556" y2="700" gradientUnits="userSpaceOnUse">
  <stop offset="0" stop-color="#2b3540"/><stop offset=".4" stop-color="#323b47"/><stop offset="1" stop-color="#373f4e"/>
 </linearGradient>
 <linearGradient id="cyl2" x1="360" y1="670" x2="440" y2="640" gradientUnits="userSpaceOnUse">
  <stop offset="0" stop-color="#313b47"/><stop offset=".5" stop-color="#2c353f"/><stop offset="1" stop-color="#2a333c"/>
 </linearGradient>
 <linearGradient id="cap2" x1="345" y1="650" x2="400" y2="605" gradientUnits="userSpaceOnUse">
  <stop offset="0" stop-color="#66584f"/><stop offset="1" stop-color="#524f55"/>
 </linearGradient>
</defs>
<!-- page frame -->
<rect x="163.5" y="158.5" width="871" height="592" fill="#fff" stroke="#55526a" stroke-width="1"/>
<rect x="163" y="750" width="872" height="2" fill="#8079a2"/>
<g clip-path="url(#imgclip)">
 <rect x="155" y="163" width="845" height="572" fill="url(#bgH)"/>
 <rect x="155" y="163" width="845" height="572" fill="url(#bgV)"/>
 <!-- blue top-left -->
 <polygon points="155,163 241,163 219.5,319 155,327" fill="url(#tlblue)"/>
 <!-- back cube -->
 <polygon points="240.6,163 384.8,187.3 363,349 219.5,319.1" fill="url(#backface)"/>
 <polygon points="240.6,163 384.8,187.3 363,349 219.5,319.1" fill="url(#backshade)"/>
 <linearGradient id="ao" x1="373" y1="274" x2="366.600" y2="257.200" gradientUnits="userSpaceOnUse"><stop offset="0" stop-color="#3c4254" stop-opacity=".9"/><stop offset=".45" stop-color="#3e4152" stop-opacity=".5"/><stop offset="1" stop-color="#40404f" stop-opacity="0"/></linearGradient>
 <clipPath id="backclip"><polygon points="240.6,163 384.8,187.3 363,349 219.5,319.1"/></clipPath>
 <polygon clip-path="url(#backclip)" points="233.600,306.900 453.600,223.400 480,300 260,390" fill="url(#ao)"/>
 <polygon points="155,327 219.5,319.1 293,334.5 293,362 155,334.7" fill="url(#litband)"/>
 <!-- far cylinder -->
 <polygon points="568,308 636,324.500 588.500,446 584,448" fill="url(#cyl1)"/>
 <ellipse cx="602" cy="313" rx="35" ry="19.5" transform="rotate(14 602 313)" fill="#28323e"/>
 <!-- bottom cube -->
 <polygon points="529,544 678,625 648,736 425,736" fill="url(#cubeB)"/>
 <linearGradient id="cubeBfade" x1="560" y1="0" x2="680" y2="0" gradientUnits="userSpaceOnUse"><stop offset="0" stop-color="#313f50" stop-opacity="0"/><stop offset="1" stop-color="#323f50" stop-opacity=".75"/></linearGradient>
 <polygon points="529,544 678,625 648,736 425,736" fill="url(#cubeBfade)"/>
 <linearGradient id="edgeL" x1="529" y1="544" x2="425" y2="735" gradientUnits="userSpaceOnUse"><stop offset="0" stop-color="#5a687c" stop-opacity=".2"/><stop offset=".4" stop-color="#6c7a90"/><stop offset="1" stop-color="#66748a"/></linearGradient>
 <line x1="529" y1="544" x2="425" y2="735" stroke="url(#edgeL)" stroke-width="1"/>
 <!-- bottom cylinder -->
 <polygon points="342,649 402,604 457,674 424,736 410,736" fill="url(#cyl2)"/>
 <line x1="342" y1="649.500" x2="410" y2="735" stroke="#54403f" stroke-width="1" stroke-opacity=".7"/>
 <ellipse cx="371.700" cy="626" rx="36.500" ry="13.500" transform="rotate(-37.500 371.700 626)" fill="url(#cap2)"/>
 <!-- main cube -->
 <polygon points="292,304 430.3,391.5 418.4,576.8 283,484" fill="url(#leftbase)"/>
 <polygon points="292,304 430.3,391.5 418.4,576.8 283,484" fill="url(#leftshade)"/>
 <polygon points="430.3,391.5 593,330 581.3,509.7 418.4,576.8" fill="url(#rightface)"/>
 <polygon points="454,242.5 593,330 430.3,391.5 292,304" fill="url(#topbase)"/>
 <polygon points="454,242.5 593,330 430.3,391.5 292,304" fill="url(#topglow)"/>
 <!-- suns -->
 <circle cx="547" cy="247" r="35" fill="#e4e663"/>
 <circle cx="208" cy="509" r="35" fill="#e4e663"/>
</g>
<!-- center x -->
<path d="M573 444 L579 450 M579 444 L573 450" stroke="#d8dce2" stroke-width="1.6" fill="none"/>
<!-- handles -->
<g fill="#000" shape-rendering="crispEdges">
 <rect x="144" y="151" width="7" height="7"/><rect x="573" y="151" width="7" height="7"/><rect x="1003" y="151" width="7" height="7"/>
 <rect x="144" y="444" width="7" height="7"/><rect x="1003" y="444" width="7" height="7"/>
 <rect x="144" y="737" width="7" height="7"/><rect x="573" y="737" width="7" height="7"/><rect x="1003" y="737" width="7" height="7"/>
</g>
<g fill="#fff" stroke="#000" stroke-width="1" shape-rendering="crispEdges">
 <rect x="153.5" y="160.5" width="3" height="3"/><rect x="998.5" y="160.5" width="3" height="3"/>
 <rect x="153.5" y="732.5" width="3" height="3"/><rect x="998.5" y="732.5" width="3" height="3"/>
</g>
</svg>

</body>
</html>
